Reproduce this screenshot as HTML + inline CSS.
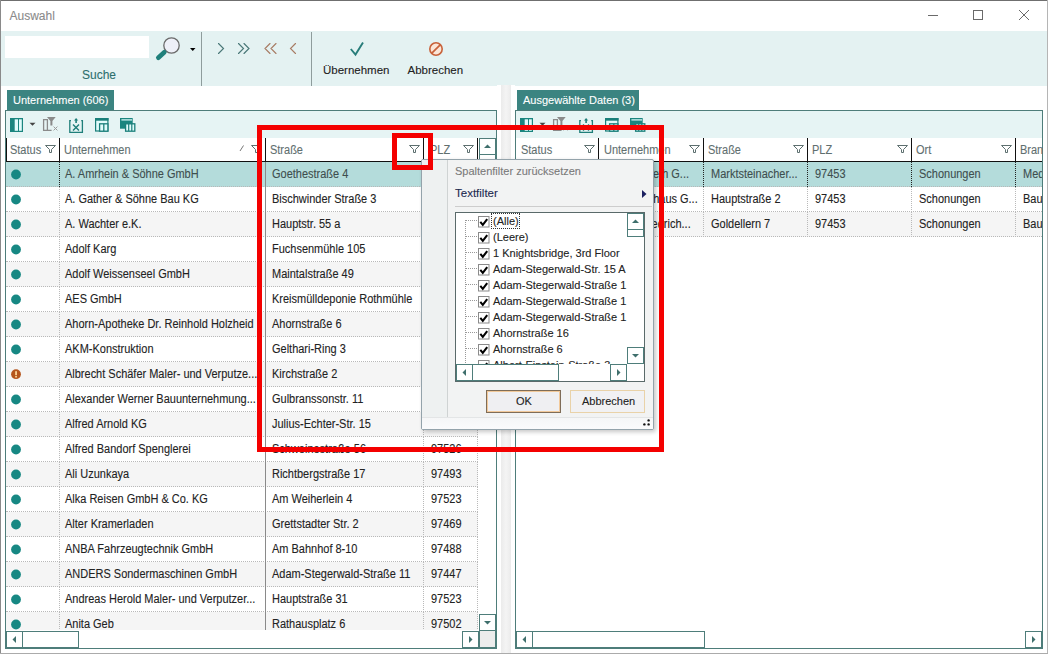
<!DOCTYPE html><html><head><meta charset="utf-8"><style>
html,body{margin:0;padding:0;}
body{width:1048px;height:654px;position:relative;overflow:hidden;background:#fff;font-family:"Liberation Sans",sans-serif;-webkit-text-stroke:0.1px currentColor;}
div{box-sizing:border-box;}
svg{position:absolute;overflow:visible;}
.c{position:absolute;top:0;line-height:24px;font-size:12px;white-space:nowrap;transform:scaleX(0.915);transform-origin:0 0;}
.h{position:absolute;font-size:12px;line-height:14px;white-space:nowrap;transform:scaleX(0.915);transform-origin:0 0;color:#5f6f6f;}
</style></head><body>
<div style="position:absolute;left:0px;top:0px;width:1048px;height:1px;background:#6f6f6f"></div>
<div style="position:absolute;left:0px;top:0px;width:1px;height:654px;background:#8a8a8a"></div>
<div style="position:absolute;left:1047px;top:0px;width:1px;height:654px;background:#b5b5b5"></div>
<div style="position:absolute;left:0px;top:653px;width:1048px;height:1px;background:#ababab"></div>
<div style="position:absolute;left:9.5px;top:10.14px;font-size:12px;line-height:13.788px;color:#8a8a8a;white-space:nowrap;">Auswahl</div>
<svg style="left:0;top:0" width="1048" height="30"><g stroke="#6a6a6a" stroke-width="1" fill="none"><line x1="928" y1="15.5" x2="938" y2="15.5"/><rect x="973.5" y="10.5" width="9" height="9"/><line x1="1019" y1="10" x2="1029" y2="20"/><line x1="1029" y1="10" x2="1019" y2="20"/></g></svg>
<div style="position:absolute;left:1px;top:31px;width:1046px;height:55px;background:#e4f2f2"></div>
<div style="position:absolute;left:5px;top:36px;width:144px;height:22px;background:#fff"></div>
<div style="position:absolute;left:82px;top:69.14px;font-size:12px;line-height:13.788px;color:#2d6f6d;white-space:nowrap;">Suche</div>
<svg style="left:150px;top:30px" width="50" height="40"><circle cx="21.5" cy="15.5" r="7.7" fill="#eef0f8" stroke="#6a6a6a" stroke-width="1.3"/><line x1="8.3" y1="27.8" x2="14.3" y2="22.3" stroke="#1f807b" stroke-width="4.6" stroke-linecap="round"/><path d="M40 18 L45.5 18 L42.75 21 Z" fill="#000"/></svg>
<div style="position:absolute;left:201px;top:32px;width:1px;height:54px;background:#8e9c9c"></div>
<div style="position:absolute;left:311px;top:32px;width:1px;height:54px;background:#8e9c9c"></div>
<svg style="left:210px;top:35px" width="100" height="30"><g fill="none" stroke-width="1.15" stroke-linecap="round"><path d="M8.5 8.5 L13.5 13.5 L8.5 18.5" stroke="#4a7878"/><path d="M28.5 8.5 L33.5 13.5 L28.5 18.5 M34 8.5 L39 13.5 L34 18.5" stroke="#4a7878"/><path d="M60 8.5 L55 13.5 L60 18.5 M66 8.5 L61 13.5 L66 18.5" stroke="#a87c64"/><path d="M85.5 8.5 L80.5 13.5 L85.5 18.5" stroke="#a87c64"/></g></svg>
<svg style="left:340px;top:35px" width="120" height="30"><g fill="none" stroke-width="1.8" stroke-linecap="butt"><path d="M10.8 14 L15.5 19.6 L23 7.4" stroke="#287d7a" stroke-width="1.9"/><circle cx="96" cy="14" r="6.2" stroke="#c8623a" fill="#fbe6d8" stroke-width="1.6"/><line x1="100.2" y1="9.8" x2="91.8" y2="18.2" stroke="#c8623a" stroke-width="1.7"/></g></svg>
<div style="position:absolute;left:323px;top:63.59px;font-size:11.5px;line-height:13.213px;color:#222;white-space:nowrap;">Übernehmen</div>
<div style="position:absolute;left:407.5px;top:63.59px;font-size:11.5px;line-height:13.213px;color:#222;white-space:nowrap;">Abbrechen</div>
<div style="position:absolute;left:7px;top:90px;width:107px;height:20px;background:#3b8481"></div>
<div style="position:absolute;left:13px;top:94.05px;font-size:11px;line-height:12.639px;color:#fff;white-space:nowrap;">Unternehmen (606)</div>
<div style="position:absolute;left:5px;top:110px;width:492px;height:539px;border:1px solid #4e7d7a;background:#fff"></div>
<div style="position:absolute;left:6px;top:111px;width:490px;height:27px;background:#e6f4f4"></div>
<svg style="left:5px;top:110px" width="140" height="28"><rect x="5" y="8" width="13" height="14" fill="#1a857f"/><rect x="9.7" y="9.3" width="3.3" height="11.5" fill="#e0fbfb"/><rect x="14" y="9.3" width="2.8" height="11.5" fill="#e0fbfb"/><path d="M24.5 12.8 L30.5 12.8 L27.5 15.8 Z" fill="#444"/><path d="M38.6 9.6 H42.4 V20.4 H38.6 Z M42.4 20.4 H46.6" fill="none" stroke="#8a8a8a" stroke-width="1.3"/><path d="M42 7 H50.7 L47.4 11 V15.5 H45.4 V11 Z" fill="#8a8a8a"/><path d="M48.6 16.6 L52.4 20.4 M52.4 16.6 L48.6 20.4" stroke="#9a9a9a" stroke-width="1"/><path d="M66 10.6 H64.8 V22.3 H77.4 V10.6 H76.2" fill="none" stroke="#1f7f7a" stroke-width="1.3"/><path d="M71.1 13 V9.5" fill="none" stroke="#1f7f7a" stroke-width="1.6"/><path d="M69 10.6 L71.1 8 L73.2 10.6 Z" fill="#1f7f7a"/><path d="M68 14.4 L74 20.6 M74 14.4 L68 20.6" stroke="#1f7f7a" stroke-width="1.4"/><rect x="90.6" y="8.6" width="12.3" height="12.4" fill="#e0fbfb" stroke="#1a7f7a" stroke-width="1.2"/><rect x="90" y="8" width="13.5" height="2.7" fill="#1a7f7a"/><rect x="94.6" y="13.8" width="8.3" height="7.4" fill="#e0fbfb" stroke="#1a7f7a" stroke-width="1.3"/><line x1="98.8" y1="13.8" x2="98.8" y2="21" stroke="#1a7f7a" stroke-width="1.3"/><rect x="115" y="8" width="12.7" height="10.7" fill="#1a857f"/><rect x="116.4" y="9.3" width="10.6" height="1.2" fill="#e0fbfb"/><rect x="120.6" y="13.8" width="9.2" height="7.4" fill="#e0fbfb" stroke="#1a7f7a" stroke-width="1.3"/><line x1="123.7" y1="13.8" x2="123.7" y2="21" stroke="#1a7f7a" stroke-width="1.2"/><line x1="126.8" y1="13.8" x2="126.8" y2="21" stroke="#1a7f7a" stroke-width="1.2"/></svg>
<div style="position:absolute;left:6px;top:138px;width:472px;height:24px;background:#fff;border-bottom:1px solid #111"></div>
<div style="position:absolute;left:6px;top:138px;width:1px;height:24px;background:#111"></div>
<div style="position:absolute;left:59px;top:138px;width:1px;height:24px;background:#111"></div>
<div style="position:absolute;left:265px;top:138px;width:1px;height:24px;background:#111"></div>
<div style="position:absolute;left:423px;top:138px;width:1px;height:24px;background:#111"></div>
<div style="position:absolute;left:477px;top:138px;width:1px;height:24px;background:#111"></div>
<div class="h" style="left:10px;top:143px">Status</div>
<svg style="left:45px;top:145px" width="12" height="10"><path d="M0.5 0.5 H10.5 L6.5 4.5 V7.5 H4.5 V4.5 Z" fill="none" stroke="#5d6f6f" stroke-width="1" stroke-linejoin="miter"/></svg>
<div class="h" style="left:64px;top:143px">Unternehmen</div>
<svg style="left:251px;top:145px" width="12" height="10"><path d="M0.5 0.5 H10.5 L6.5 4.5 V7.5 H4.5 V4.5 Z" fill="none" stroke="#5d6f6f" stroke-width="1" stroke-linejoin="miter"/></svg>
<svg style="left:239px;top:144px" width="6" height="8"><line x1="1" y1="7" x2="4.5" y2="1.5" stroke="#777" stroke-width="1"/></svg>
<div class="h" style="left:270px;top:143px">Straße</div>
<svg style="left:409px;top:145px" width="12" height="10"><path d="M0.5 0.5 H10.5 L6.5 4.5 V7.5 H4.5 V4.5 Z" fill="none" stroke="#5d6f6f" stroke-width="1" stroke-linejoin="miter"/></svg>
<div class="h" style="left:429.5px;top:143px">PLZ</div>
<svg style="left:463px;top:145px" width="12" height="10"><path d="M0.5 0.5 H10.5 L6.5 4.5 V7.5 H4.5 V4.5 Z" fill="none" stroke="#5d6f6f" stroke-width="1" stroke-linejoin="miter"/></svg>
<div style="position:absolute;left:6px;top:162px;width:472px;height:468px;overflow:hidden">
<div style="position:absolute;left:0;top:0px;width:472px;height:25px;background:#b4dcdb;border-bottom:1px dotted #b9b9b9">
<div style="position:absolute;left:53px;top:0;height:25px;border-left:1px dotted #222"></div>
<div style="position:absolute;left:259px;top:0;height:25px;width:1px;background:#8a8a8a"></div>
<div style="position:absolute;left:417px;top:0;height:25px;border-left:1px dotted #222"></div>
<div style="position:absolute;left:471px;top:0;height:25px;border-left:1px dotted #222"></div>
<svg style="left:5px;top:7px" width="11" height="11"><circle cx="5" cy="5.5" r="4.9" fill="#178883"/></svg>
<div class="c" style="left:59px;color:#3e4e4e">A. Amrhein &amp; Söhne GmbH</div>
<div class="c" style="left:265.5px;color:#3e4e4e">Goethestraße 4</div>
<div class="c" style="left:424.5px;color:#3e4e4e">97453</div>
</div>
<div style="position:absolute;left:0;top:25px;width:472px;height:25px;background:#fff;border-bottom:1px dotted #b9b9b9">
<div style="position:absolute;left:53px;top:0;height:25px;border-left:1px dotted #b9b9b9"></div>
<div style="position:absolute;left:259px;top:0;height:25px;width:1px;background:#8a8a8a"></div>
<div style="position:absolute;left:417px;top:0;height:25px;border-left:1px dotted #b9b9b9"></div>
<div style="position:absolute;left:471px;top:0;height:25px;border-left:1px dotted #b9b9b9"></div>
<svg style="left:5px;top:7px" width="11" height="11"><circle cx="5" cy="5.5" r="4.9" fill="#178883"/></svg>
<div class="c" style="left:59px;color:#222">A. Gather &amp; Söhne Bau KG</div>
<div class="c" style="left:265.5px;color:#222">Bischwinder Straße 3</div>
<div class="c" style="left:424.5px;color:#222">97500</div>
</div>
<div style="position:absolute;left:0;top:50px;width:472px;height:25px;background:#f5f5f5;border-bottom:1px dotted #b9b9b9">
<div style="position:absolute;left:53px;top:0;height:25px;border-left:1px dotted #b9b9b9"></div>
<div style="position:absolute;left:259px;top:0;height:25px;width:1px;background:#8a8a8a"></div>
<div style="position:absolute;left:417px;top:0;height:25px;border-left:1px dotted #b9b9b9"></div>
<div style="position:absolute;left:471px;top:0;height:25px;border-left:1px dotted #b9b9b9"></div>
<svg style="left:5px;top:7px" width="11" height="11"><circle cx="5" cy="5.5" r="4.9" fill="#178883"/></svg>
<div class="c" style="left:59px;color:#222">A. Wachter e.K.</div>
<div class="c" style="left:265.5px;color:#222">Hauptstr. 55 a</div>
<div class="c" style="left:424.5px;color:#222">97500</div>
</div>
<div style="position:absolute;left:0;top:75px;width:472px;height:25px;background:#fff;border-bottom:1px dotted #b9b9b9">
<div style="position:absolute;left:53px;top:0;height:25px;border-left:1px dotted #b9b9b9"></div>
<div style="position:absolute;left:259px;top:0;height:25px;width:1px;background:#8a8a8a"></div>
<div style="position:absolute;left:417px;top:0;height:25px;border-left:1px dotted #b9b9b9"></div>
<div style="position:absolute;left:471px;top:0;height:25px;border-left:1px dotted #b9b9b9"></div>
<svg style="left:5px;top:7px" width="11" height="11"><circle cx="5" cy="5.5" r="4.9" fill="#178883"/></svg>
<div class="c" style="left:59px;color:#222">Adolf Karg</div>
<div class="c" style="left:265.5px;color:#222">Fuchsenmühle 105</div>
<div class="c" style="left:424.5px;color:#222">97500</div>
</div>
<div style="position:absolute;left:0;top:100px;width:472px;height:25px;background:#f5f5f5;border-bottom:1px dotted #b9b9b9">
<div style="position:absolute;left:53px;top:0;height:25px;border-left:1px dotted #b9b9b9"></div>
<div style="position:absolute;left:259px;top:0;height:25px;width:1px;background:#8a8a8a"></div>
<div style="position:absolute;left:417px;top:0;height:25px;border-left:1px dotted #b9b9b9"></div>
<div style="position:absolute;left:471px;top:0;height:25px;border-left:1px dotted #b9b9b9"></div>
<svg style="left:5px;top:7px" width="11" height="11"><circle cx="5" cy="5.5" r="4.9" fill="#178883"/></svg>
<div class="c" style="left:59px;color:#222">Adolf Weissenseel GmbH</div>
<div class="c" style="left:265.5px;color:#222">Maintalstraße 49</div>
<div class="c" style="left:424.5px;color:#222">97500</div>
</div>
<div style="position:absolute;left:0;top:125px;width:472px;height:25px;background:#fff;border-bottom:1px dotted #b9b9b9">
<div style="position:absolute;left:53px;top:0;height:25px;border-left:1px dotted #b9b9b9"></div>
<div style="position:absolute;left:259px;top:0;height:25px;width:1px;background:#8a8a8a"></div>
<div style="position:absolute;left:417px;top:0;height:25px;border-left:1px dotted #b9b9b9"></div>
<div style="position:absolute;left:471px;top:0;height:25px;border-left:1px dotted #b9b9b9"></div>
<svg style="left:5px;top:7px" width="11" height="11"><circle cx="5" cy="5.5" r="4.9" fill="#178883"/></svg>
<div class="c" style="left:59px;color:#222">AES GmbH</div>
<div class="c" style="left:265.5px;color:#222">Kreismülldeponie Rothmühle</div>
<div class="c" style="left:424.5px;color:#222">97500</div>
</div>
<div style="position:absolute;left:0;top:150px;width:472px;height:25px;background:#f5f5f5;border-bottom:1px dotted #b9b9b9">
<div style="position:absolute;left:53px;top:0;height:25px;border-left:1px dotted #b9b9b9"></div>
<div style="position:absolute;left:259px;top:0;height:25px;width:1px;background:#8a8a8a"></div>
<div style="position:absolute;left:417px;top:0;height:25px;border-left:1px dotted #b9b9b9"></div>
<div style="position:absolute;left:471px;top:0;height:25px;border-left:1px dotted #b9b9b9"></div>
<svg style="left:5px;top:7px" width="11" height="11"><circle cx="5" cy="5.5" r="4.9" fill="#178883"/></svg>
<div class="c" style="left:59px;color:#222">Ahorn-Apotheke Dr. Reinhold Holzheid</div>
<div class="c" style="left:265.5px;color:#222">Ahornstraße 6</div>
<div class="c" style="left:424.5px;color:#222">97500</div>
</div>
<div style="position:absolute;left:0;top:175px;width:472px;height:25px;background:#fff;border-bottom:1px dotted #b9b9b9">
<div style="position:absolute;left:53px;top:0;height:25px;border-left:1px dotted #b9b9b9"></div>
<div style="position:absolute;left:259px;top:0;height:25px;width:1px;background:#8a8a8a"></div>
<div style="position:absolute;left:417px;top:0;height:25px;border-left:1px dotted #b9b9b9"></div>
<div style="position:absolute;left:471px;top:0;height:25px;border-left:1px dotted #b9b9b9"></div>
<svg style="left:5px;top:7px" width="11" height="11"><circle cx="5" cy="5.5" r="4.9" fill="#178883"/></svg>
<div class="c" style="left:59px;color:#222">AKM-Konstruktion</div>
<div class="c" style="left:265.5px;color:#222">Gelthari-Ring 3</div>
<div class="c" style="left:424.5px;color:#222">97500</div>
</div>
<div style="position:absolute;left:0;top:200px;width:472px;height:25px;background:#f5f5f5;border-bottom:1px dotted #b9b9b9">
<div style="position:absolute;left:53px;top:0;height:25px;border-left:1px dotted #b9b9b9"></div>
<div style="position:absolute;left:259px;top:0;height:25px;width:1px;background:#8a8a8a"></div>
<div style="position:absolute;left:417px;top:0;height:25px;border-left:1px dotted #b9b9b9"></div>
<div style="position:absolute;left:471px;top:0;height:25px;border-left:1px dotted #b9b9b9"></div>
<svg style="left:5px;top:7px" width="11" height="11"><circle cx="5" cy="5.2" r="4.9" fill="#b5561e"/><rect x="4.2" y="2.2" width="1.7" height="4" fill="#ffdca0"/><rect x="4.2" y="7" width="1.7" height="1.5" fill="#ffdca0"/></svg>
<div class="c" style="left:59px;color:#222">Albrecht Schäfer Maler- und Verputze...</div>
<div class="c" style="left:265.5px;color:#222">Kirchstraße 2</div>
<div class="c" style="left:424.5px;color:#222">97500</div>
</div>
<div style="position:absolute;left:0;top:225px;width:472px;height:25px;background:#fff;border-bottom:1px dotted #b9b9b9">
<div style="position:absolute;left:53px;top:0;height:25px;border-left:1px dotted #b9b9b9"></div>
<div style="position:absolute;left:259px;top:0;height:25px;width:1px;background:#8a8a8a"></div>
<div style="position:absolute;left:417px;top:0;height:25px;border-left:1px dotted #b9b9b9"></div>
<div style="position:absolute;left:471px;top:0;height:25px;border-left:1px dotted #b9b9b9"></div>
<svg style="left:5px;top:7px" width="11" height="11"><circle cx="5" cy="5.5" r="4.9" fill="#178883"/></svg>
<div class="c" style="left:59px;color:#222">Alexander Werner Bauunternehmung...</div>
<div class="c" style="left:265.5px;color:#222">Gulbranssonstr. 11</div>
<div class="c" style="left:424.5px;color:#222">97500</div>
</div>
<div style="position:absolute;left:0;top:250px;width:472px;height:25px;background:#f5f5f5;border-bottom:1px dotted #b9b9b9">
<div style="position:absolute;left:53px;top:0;height:25px;border-left:1px dotted #b9b9b9"></div>
<div style="position:absolute;left:259px;top:0;height:25px;width:1px;background:#8a8a8a"></div>
<div style="position:absolute;left:417px;top:0;height:25px;border-left:1px dotted #b9b9b9"></div>
<div style="position:absolute;left:471px;top:0;height:25px;border-left:1px dotted #b9b9b9"></div>
<svg style="left:5px;top:7px" width="11" height="11"><circle cx="5" cy="5.5" r="4.9" fill="#178883"/></svg>
<div class="c" style="left:59px;color:#222">Alfred Arnold KG</div>
<div class="c" style="left:265.5px;color:#222">Julius-Echter-Str. 15</div>
<div class="c" style="left:424.5px;color:#222">97500</div>
</div>
<div style="position:absolute;left:0;top:275px;width:472px;height:25px;background:#fff;border-bottom:1px dotted #b9b9b9">
<div style="position:absolute;left:53px;top:0;height:25px;border-left:1px dotted #b9b9b9"></div>
<div style="position:absolute;left:259px;top:0;height:25px;width:1px;background:#8a8a8a"></div>
<div style="position:absolute;left:417px;top:0;height:25px;border-left:1px dotted #b9b9b9"></div>
<div style="position:absolute;left:471px;top:0;height:25px;border-left:1px dotted #b9b9b9"></div>
<svg style="left:5px;top:7px" width="11" height="11"><circle cx="5" cy="5.5" r="4.9" fill="#178883"/></svg>
<div class="c" style="left:59px;color:#222">Alfred Bandorf Spenglerei</div>
<div class="c" style="left:265.5px;color:#222">Schweinestraße 56</div>
<div class="c" style="left:424.5px;color:#222">97526</div>
</div>
<div style="position:absolute;left:0;top:300px;width:472px;height:25px;background:#f5f5f5;border-bottom:1px dotted #b9b9b9">
<div style="position:absolute;left:53px;top:0;height:25px;border-left:1px dotted #b9b9b9"></div>
<div style="position:absolute;left:259px;top:0;height:25px;width:1px;background:#8a8a8a"></div>
<div style="position:absolute;left:417px;top:0;height:25px;border-left:1px dotted #b9b9b9"></div>
<div style="position:absolute;left:471px;top:0;height:25px;border-left:1px dotted #b9b9b9"></div>
<svg style="left:5px;top:7px" width="11" height="11"><circle cx="5" cy="5.5" r="4.9" fill="#178883"/></svg>
<div class="c" style="left:59px;color:#222">Ali Uzunkaya</div>
<div class="c" style="left:265.5px;color:#222">Richtbergstraße 17</div>
<div class="c" style="left:424.5px;color:#222">97493</div>
</div>
<div style="position:absolute;left:0;top:325px;width:472px;height:25px;background:#fff;border-bottom:1px dotted #b9b9b9">
<div style="position:absolute;left:53px;top:0;height:25px;border-left:1px dotted #b9b9b9"></div>
<div style="position:absolute;left:259px;top:0;height:25px;width:1px;background:#8a8a8a"></div>
<div style="position:absolute;left:417px;top:0;height:25px;border-left:1px dotted #b9b9b9"></div>
<div style="position:absolute;left:471px;top:0;height:25px;border-left:1px dotted #b9b9b9"></div>
<svg style="left:5px;top:7px" width="11" height="11"><circle cx="5" cy="5.5" r="4.9" fill="#178883"/></svg>
<div class="c" style="left:59px;color:#222">Alka Reisen GmbH &amp; Co. KG</div>
<div class="c" style="left:265.5px;color:#222">Am Weiherlein 4</div>
<div class="c" style="left:424.5px;color:#222">97523</div>
</div>
<div style="position:absolute;left:0;top:350px;width:472px;height:25px;background:#f5f5f5;border-bottom:1px dotted #b9b9b9">
<div style="position:absolute;left:53px;top:0;height:25px;border-left:1px dotted #b9b9b9"></div>
<div style="position:absolute;left:259px;top:0;height:25px;width:1px;background:#8a8a8a"></div>
<div style="position:absolute;left:417px;top:0;height:25px;border-left:1px dotted #b9b9b9"></div>
<div style="position:absolute;left:471px;top:0;height:25px;border-left:1px dotted #b9b9b9"></div>
<svg style="left:5px;top:7px" width="11" height="11"><circle cx="5" cy="5.5" r="4.9" fill="#178883"/></svg>
<div class="c" style="left:59px;color:#222">Alter Kramerladen</div>
<div class="c" style="left:265.5px;color:#222">Grettstadter Str. 2</div>
<div class="c" style="left:424.5px;color:#222">97469</div>
</div>
<div style="position:absolute;left:0;top:375px;width:472px;height:25px;background:#fff;border-bottom:1px dotted #b9b9b9">
<div style="position:absolute;left:53px;top:0;height:25px;border-left:1px dotted #b9b9b9"></div>
<div style="position:absolute;left:259px;top:0;height:25px;width:1px;background:#8a8a8a"></div>
<div style="position:absolute;left:417px;top:0;height:25px;border-left:1px dotted #b9b9b9"></div>
<div style="position:absolute;left:471px;top:0;height:25px;border-left:1px dotted #b9b9b9"></div>
<svg style="left:5px;top:7px" width="11" height="11"><circle cx="5" cy="5.5" r="4.9" fill="#178883"/></svg>
<div class="c" style="left:59px;color:#222">ANBA Fahrzeugtechnik GmbH</div>
<div class="c" style="left:265.5px;color:#222">Am Bahnhof 8-10</div>
<div class="c" style="left:424.5px;color:#222">97488</div>
</div>
<div style="position:absolute;left:0;top:400px;width:472px;height:25px;background:#f5f5f5;border-bottom:1px dotted #b9b9b9">
<div style="position:absolute;left:53px;top:0;height:25px;border-left:1px dotted #b9b9b9"></div>
<div style="position:absolute;left:259px;top:0;height:25px;width:1px;background:#8a8a8a"></div>
<div style="position:absolute;left:417px;top:0;height:25px;border-left:1px dotted #b9b9b9"></div>
<div style="position:absolute;left:471px;top:0;height:25px;border-left:1px dotted #b9b9b9"></div>
<svg style="left:5px;top:7px" width="11" height="11"><circle cx="5" cy="5.5" r="4.9" fill="#178883"/></svg>
<div class="c" style="left:59px;color:#222">ANDERS Sondermaschinen GmbH</div>
<div class="c" style="left:265.5px;color:#222">Adam-Stegerwald-Straße 11</div>
<div class="c" style="left:424.5px;color:#222">97447</div>
</div>
<div style="position:absolute;left:0;top:425px;width:472px;height:25px;background:#fff;border-bottom:1px dotted #b9b9b9">
<div style="position:absolute;left:53px;top:0;height:25px;border-left:1px dotted #b9b9b9"></div>
<div style="position:absolute;left:259px;top:0;height:25px;width:1px;background:#8a8a8a"></div>
<div style="position:absolute;left:417px;top:0;height:25px;border-left:1px dotted #b9b9b9"></div>
<div style="position:absolute;left:471px;top:0;height:25px;border-left:1px dotted #b9b9b9"></div>
<svg style="left:5px;top:7px" width="11" height="11"><circle cx="5" cy="5.5" r="4.9" fill="#178883"/></svg>
<div class="c" style="left:59px;color:#222">Andreas Herold Maler- und Verputzer...</div>
<div class="c" style="left:265.5px;color:#222">Hauptstraße 31</div>
<div class="c" style="left:424.5px;color:#222">97523</div>
</div>
<div style="position:absolute;left:0;top:450px;width:472px;height:25px;background:#f5f5f5;border-bottom:1px dotted #b9b9b9">
<div style="position:absolute;left:53px;top:0;height:25px;border-left:1px dotted #b9b9b9"></div>
<div style="position:absolute;left:259px;top:0;height:25px;width:1px;background:#8a8a8a"></div>
<div style="position:absolute;left:417px;top:0;height:25px;border-left:1px dotted #b9b9b9"></div>
<div style="position:absolute;left:471px;top:0;height:25px;border-left:1px dotted #b9b9b9"></div>
<svg style="left:5px;top:7px" width="11" height="11"><circle cx="5" cy="5.5" r="4.9" fill="#178883"/></svg>
<div class="c" style="left:59px;color:#222">Anita Geb</div>
<div class="c" style="left:265.5px;color:#222">Rathausplatz 6</div>
<div class="c" style="left:424.5px;color:#222">97502</div>
</div>
</div>
<div style="position:absolute;left:478px;top:138px;width:18px;height:492px;background:#fff"></div>
<div style="position:absolute;left:479px;top:154px;width:17px;height:40px;border:1px solid #4e7d7a;background:#fff"></div>
<div style="position:absolute;left:479px;top:138px;width:17px;height:17px;border:1px solid #4e7d7a;background:#fff"></div>
<svg style="left:0;top:0" width="1048" height="654"><path d="M484.0 148.0 L491.0 148.0 L487.5 144.5 Z" fill="#3f6f6c"/></svg>
<div style="position:absolute;left:479px;top:614px;width:17px;height:17px;border:1px solid #4e7d7a;background:#fff"></div>
<svg style="left:0;top:0" width="1048" height="654"><path d="M484.0 621.0 L491.0 621.0 L487.5 624.5 Z" fill="#3f6f6c"/></svg>
<div style="position:absolute;left:479px;top:630px;width:17px;height:18px;background:#ececec;border:1px solid #4e7d7a"></div>
<div style="position:absolute;left:6px;top:630px;width:473px;height:18px;background:#fff"></div>
<div style="position:absolute;left:6px;top:631px;width:17px;height:17px;border:1px solid #4e7d7a;background:#fff"></div>
<svg style="left:0;top:0" width="1048" height="654"><path d="M16.0 636.0 L16.0 643.0 L12.5 639.5 Z" fill="#3f6f6c"/></svg>
<div style="position:absolute;left:22px;top:631px;width:57px;height:17px;border:1px solid #4e7d7a;background:#fff"></div>
<div style="position:absolute;left:462px;top:631px;width:17px;height:17px;border:1px solid #4e7d7a;background:#fff"></div>
<svg style="left:0;top:0" width="1048" height="654"><path d="M469.0 636.0 L469.0 643.0 L472.5 639.5 Z" fill="#3f6f6c"/></svg>
<div style="position:absolute;left:497px;top:85px;width:18px;height:568px;background:#fff"></div>
<div style="position:absolute;left:501px;top:85px;width:10px;height:568px;background:linear-gradient(90deg,#ebebeb,#f4f4f4 50%,#ebebeb)"></div>
<div style="position:absolute;left:517px;top:90px;width:122px;height:20px;background:#3b8481"></div>
<div style="position:absolute;left:523px;top:94.05px;font-size:11px;line-height:12.639px;color:#fff;white-space:nowrap;">Ausgewählte Daten (3)</div>
<div style="position:absolute;left:515px;top:110px;width:528px;height:539px;border:1px solid #4e7d7a;background:#fff"></div>
<div style="position:absolute;left:516px;top:111px;width:526px;height:27px;background:#e6f4f4"></div>
<svg style="left:515px;top:110px" width="140" height="28"><rect x="5" y="8" width="13" height="14" fill="#1a857f"/><rect x="9.7" y="9.3" width="3.3" height="11.5" fill="#e0fbfb"/><rect x="14" y="9.3" width="2.8" height="11.5" fill="#e0fbfb"/><path d="M24.5 12.8 L30.5 12.8 L27.5 15.8 Z" fill="#444"/><path d="M38.6 9.6 H42.4 V20.4 H38.6 Z M42.4 20.4 H46.6" fill="none" stroke="#8a8a8a" stroke-width="1.3"/><path d="M42 7 H50.7 L47.4 11 V15.5 H45.4 V11 Z" fill="#8a8a8a"/><path d="M48.6 16.6 L52.4 20.4 M52.4 16.6 L48.6 20.4" stroke="#9a9a9a" stroke-width="1"/><path d="M66 10.6 H64.8 V22.3 H77.4 V10.6 H76.2" fill="none" stroke="#1f7f7a" stroke-width="1.3"/><path d="M71.1 13 V9.5" fill="none" stroke="#1f7f7a" stroke-width="1.6"/><path d="M69 10.6 L71.1 8 L73.2 10.6 Z" fill="#1f7f7a"/><path d="M68 14.4 L74 20.6 M74 14.4 L68 20.6" stroke="#1f7f7a" stroke-width="1.4"/><rect x="90.6" y="8.6" width="12.3" height="12.4" fill="#e0fbfb" stroke="#1a7f7a" stroke-width="1.2"/><rect x="90" y="8" width="13.5" height="2.7" fill="#1a7f7a"/><rect x="94.6" y="13.8" width="8.3" height="7.4" fill="#e0fbfb" stroke="#1a7f7a" stroke-width="1.3"/><line x1="98.8" y1="13.8" x2="98.8" y2="21" stroke="#1a7f7a" stroke-width="1.3"/><rect x="115" y="8" width="12.7" height="10.7" fill="#1a857f"/><rect x="116.4" y="9.3" width="10.6" height="1.2" fill="#e0fbfb"/><rect x="120.6" y="13.8" width="9.2" height="7.4" fill="#e0fbfb" stroke="#1a7f7a" stroke-width="1.3"/><line x1="123.7" y1="13.8" x2="123.7" y2="21" stroke="#1a7f7a" stroke-width="1.2"/><line x1="126.8" y1="13.8" x2="126.8" y2="21" stroke="#1a7f7a" stroke-width="1.2"/></svg>
<div style="position:absolute;left:516px;top:138px;width:526px;height:24px;background:#fff;border-bottom:1px solid #111"></div>
<div style="position:absolute;left:598px;top:138px;width:1px;height:24px;background:#111"></div>
<div style="position:absolute;left:703px;top:138px;width:1px;height:24px;background:#111"></div>
<div style="position:absolute;left:807px;top:138px;width:1px;height:24px;background:#111"></div>
<div style="position:absolute;left:911px;top:138px;width:1px;height:24px;background:#111"></div>
<div style="position:absolute;left:1015px;top:138px;width:1px;height:24px;background:#111"></div>
<div class="h" style="left:521px;top:143px">Status</div>
<svg style="left:584px;top:145px" width="12" height="10"><path d="M0.5 0.5 H10.5 L6.5 4.5 V7.5 H4.5 V4.5 Z" fill="none" stroke="#5d6f6f" stroke-width="1" stroke-linejoin="miter"/></svg>
<div class="h" style="left:603.5px;top:143px">Unternehmen</div>
<svg style="left:689px;top:145px" width="12" height="10"><path d="M0.5 0.5 H10.5 L6.5 4.5 V7.5 H4.5 V4.5 Z" fill="none" stroke="#5d6f6f" stroke-width="1" stroke-linejoin="miter"/></svg>
<div class="h" style="left:708px;top:143px">Straße</div>
<svg style="left:793px;top:145px" width="12" height="10"><path d="M0.5 0.5 H10.5 L6.5 4.5 V7.5 H4.5 V4.5 Z" fill="none" stroke="#5d6f6f" stroke-width="1" stroke-linejoin="miter"/></svg>
<div class="h" style="left:812px;top:143px">PLZ</div>
<svg style="left:897px;top:145px" width="12" height="10"><path d="M0.5 0.5 H10.5 L6.5 4.5 V7.5 H4.5 V4.5 Z" fill="none" stroke="#5d6f6f" stroke-width="1" stroke-linejoin="miter"/></svg>
<div class="h" style="left:916px;top:143px">Ort</div>
<svg style="left:1001px;top:145px" width="12" height="10"><path d="M0.5 0.5 H10.5 L6.5 4.5 V7.5 H4.5 V4.5 Z" fill="none" stroke="#5d6f6f" stroke-width="1" stroke-linejoin="miter"/></svg>
<div class="h" style="left:1020px;top:143px">Bran</div>
<div style="position:absolute;left:516px;top:162px;width:526px;height:76px;overflow:hidden">
<div style="position:absolute;left:0;top:0px;width:526px;height:25px;background:#b4dcdb;border-bottom:1px dotted #b9b9b9">
<div style="position:absolute;left:82px;top:0;height:25px;border-left:1px dotted #222"></div>
<div style="position:absolute;left:187px;top:0;height:25px;border-left:1px dotted #222"></div>
<div style="position:absolute;left:291px;top:0;height:25px;border-left:1px dotted #222"></div>
<div style="position:absolute;left:395px;top:0;height:25px;border-left:1px dotted #222"></div>
<div style="position:absolute;left:499px;top:0;height:25px;border-left:1px dotted #222"></div>
<svg style="left:6px;top:7px" width="11" height="11"><circle cx="5" cy="5.5" r="4.9" fill="#178883"/></svg>
<div class="c" style="right:353px;color:#3e4e4e;transform-origin:100% 0">Wilhelm Kleth G...</div>
<div class="c" style="left:195px;color:#3e4e4e">Marktsteinacher...</div>
<div class="c" style="left:299px;color:#3e4e4e">97453</div>
<div class="c" style="left:403px;color:#3e4e4e">Schonungen</div>
<div class="c" style="left:507px;color:#3e4e4e">Medizin</div>
</div>
<div style="position:absolute;left:0;top:25px;width:526px;height:25px;background:#fff;border-bottom:1px dotted #b9b9b9">
<div style="position:absolute;left:82px;top:0;height:25px;border-left:1px dotted #b9b9b9"></div>
<div style="position:absolute;left:187px;top:0;height:25px;border-left:1px dotted #b9b9b9"></div>
<div style="position:absolute;left:291px;top:0;height:25px;border-left:1px dotted #b9b9b9"></div>
<div style="position:absolute;left:395px;top:0;height:25px;border-left:1px dotted #b9b9b9"></div>
<div style="position:absolute;left:499px;top:0;height:25px;border-left:1px dotted #b9b9b9"></div>
<svg style="left:6px;top:7px" width="11" height="11"><circle cx="5" cy="5.5" r="4.9" fill="#178883"/></svg>
<div class="c" style="right:344px;color:#222;transform-origin:100% 0">Schenkhaus G...</div>
<div class="c" style="left:195px;color:#222">Hauptstraße 2</div>
<div class="c" style="left:299px;color:#222">97453</div>
<div class="c" style="left:403px;color:#222">Schonungen</div>
<div class="c" style="left:507px;color:#222">Bau</div>
</div>
<div style="position:absolute;left:0;top:50px;width:526px;height:25px;background:#f5f5f5;border-bottom:1px dotted #b9b9b9">
<div style="position:absolute;left:82px;top:0;height:25px;border-left:1px dotted #b9b9b9"></div>
<div style="position:absolute;left:187px;top:0;height:25px;border-left:1px dotted #b9b9b9"></div>
<div style="position:absolute;left:291px;top:0;height:25px;border-left:1px dotted #b9b9b9"></div>
<div style="position:absolute;left:395px;top:0;height:25px;border-left:1px dotted #b9b9b9"></div>
<div style="position:absolute;left:499px;top:0;height:25px;border-left:1px dotted #b9b9b9"></div>
<svg style="left:6px;top:7px" width="11" height="11"><circle cx="5" cy="5.5" r="4.9" fill="#178883"/></svg>
<div class="c" style="right:351px;color:#222;transform-origin:100% 0">Friedrich...</div>
<div class="c" style="left:195px;color:#222">Goldellern 7</div>
<div class="c" style="left:299px;color:#222">97453</div>
<div class="c" style="left:403px;color:#222">Schonungen</div>
<div class="c" style="left:507px;color:#222">Bau</div>
</div>
</div>
<div style="position:absolute;left:516px;top:631px;width:17px;height:17px;border:1px solid #4e7d7a;background:#fff"></div>
<svg style="left:0;top:0" width="1048" height="654"><path d="M526.0 636.0 L526.0 643.0 L522.5 639.5 Z" fill="#3f6f6c"/></svg>
<div style="position:absolute;left:532px;top:631px;width:173px;height:17px;border:1px solid #4e7d7a;background:#fff"></div>
<div style="position:absolute;left:1025px;top:631px;width:17px;height:17px;border:1px solid #4e7d7a;background:#fff"></div>
<svg style="left:0;top:0" width="1048" height="654"><path d="M1032.0 636.0 L1032.0 643.0 L1035.5 639.5 Z" fill="#3f6f6c"/></svg>
<div style="position:absolute;left:421px;top:159px;width:233px;height:271px;background:#f2f3f3;border:1px solid #94a3ab;border-radius:2px;box-shadow:2px 2px 4px rgba(0,0,0,0.22)"></div>
<div style="position:absolute;left:422px;top:160px;width:26px;height:257px;background:#eef1f1;border-right:1px solid #cfd3d3"></div>
<div style="position:absolute;left:455px;top:164.54px;font-size:11px;line-height:12.639px;color:#7a7a7a;white-space:nowrap;">Spaltenfilter zurücksetzen</div>
<div style="position:absolute;left:455px;top:186.59px;font-size:11.5px;line-height:13.213px;color:#222a50;white-space:nowrap;">Textfilter</div>
<svg style="left:642px;top:190px" width="6" height="9"><path d="M0 0 L4.5 4 L0 8 Z" fill="#1b2060"/></svg>
<div style="position:absolute;left:455px;top:206px;width:197px;height:1px;background:#cdcdcd"></div>
<div style="position:absolute;left:455px;top:212px;width:190px;height:170px;background:#fff;border:1px solid #5a6a6a"></div>
<div style="position:absolute;left:456px;top:213px;width:171px;height:151px;overflow:hidden">
<div style="position:absolute;left:10px;top:7px;width:11px;border-top:1px dotted #999"></div>
<svg style="left:22px;top:3px" width="12" height="12"><rect x="0.5" y="0.5" width="10.5" height="10.5" fill="#fff" stroke="#8a8a8a"/><path d="M2.3 5.8 L4.8 8.8 L9.2 3.2" fill="none" stroke="#000" stroke-width="2.1"/></svg>
<div style="position:absolute;left:37px;top:0px;line-height:16px;font-size:11px;color:#222;white-space:nowrap">(Alle)</div>
<div style="position:absolute;left:10px;top:23px;width:11px;border-top:1px dotted #999"></div>
<svg style="left:22px;top:19px" width="12" height="12"><rect x="0.5" y="0.5" width="10.5" height="10.5" fill="#fff" stroke="#8a8a8a"/><path d="M2.3 5.8 L4.8 8.8 L9.2 3.2" fill="none" stroke="#000" stroke-width="2.1"/></svg>
<div style="position:absolute;left:37px;top:16px;line-height:16px;font-size:11px;color:#222;white-space:nowrap">(Leere)</div>
<div style="position:absolute;left:10px;top:39px;width:11px;border-top:1px dotted #999"></div>
<svg style="left:22px;top:35px" width="12" height="12"><rect x="0.5" y="0.5" width="10.5" height="10.5" fill="#fff" stroke="#8a8a8a"/><path d="M2.3 5.8 L4.8 8.8 L9.2 3.2" fill="none" stroke="#000" stroke-width="2.1"/></svg>
<div style="position:absolute;left:37px;top:32px;line-height:16px;font-size:11px;color:#222;white-space:nowrap">1 Knightsbridge, 3rd Floor</div>
<div style="position:absolute;left:10px;top:55px;width:11px;border-top:1px dotted #999"></div>
<svg style="left:22px;top:51px" width="12" height="12"><rect x="0.5" y="0.5" width="10.5" height="10.5" fill="#fff" stroke="#8a8a8a"/><path d="M2.3 5.8 L4.8 8.8 L9.2 3.2" fill="none" stroke="#000" stroke-width="2.1"/></svg>
<div style="position:absolute;left:37px;top:48px;line-height:16px;font-size:11px;color:#222;white-space:nowrap">Adam-Stegerwald-Str. 15 A</div>
<div style="position:absolute;left:10px;top:71px;width:11px;border-top:1px dotted #999"></div>
<svg style="left:22px;top:67px" width="12" height="12"><rect x="0.5" y="0.5" width="10.5" height="10.5" fill="#fff" stroke="#8a8a8a"/><path d="M2.3 5.8 L4.8 8.8 L9.2 3.2" fill="none" stroke="#000" stroke-width="2.1"/></svg>
<div style="position:absolute;left:37px;top:64px;line-height:16px;font-size:11px;color:#222;white-space:nowrap">Adam-Stegerwald-Straße 1</div>
<div style="position:absolute;left:10px;top:87px;width:11px;border-top:1px dotted #999"></div>
<svg style="left:22px;top:83px" width="12" height="12"><rect x="0.5" y="0.5" width="10.5" height="10.5" fill="#fff" stroke="#8a8a8a"/><path d="M2.3 5.8 L4.8 8.8 L9.2 3.2" fill="none" stroke="#000" stroke-width="2.1"/></svg>
<div style="position:absolute;left:37px;top:80px;line-height:16px;font-size:11px;color:#222;white-space:nowrap">Adam-Stegerwald-Straße 1</div>
<div style="position:absolute;left:10px;top:103px;width:11px;border-top:1px dotted #999"></div>
<svg style="left:22px;top:99px" width="12" height="12"><rect x="0.5" y="0.5" width="10.5" height="10.5" fill="#fff" stroke="#8a8a8a"/><path d="M2.3 5.8 L4.8 8.8 L9.2 3.2" fill="none" stroke="#000" stroke-width="2.1"/></svg>
<div style="position:absolute;left:37px;top:96px;line-height:16px;font-size:11px;color:#222;white-space:nowrap">Adam-Stegerwald-Straße 1</div>
<div style="position:absolute;left:10px;top:119px;width:11px;border-top:1px dotted #999"></div>
<svg style="left:22px;top:115px" width="12" height="12"><rect x="0.5" y="0.5" width="10.5" height="10.5" fill="#fff" stroke="#8a8a8a"/><path d="M2.3 5.8 L4.8 8.8 L9.2 3.2" fill="none" stroke="#000" stroke-width="2.1"/></svg>
<div style="position:absolute;left:37px;top:112px;line-height:16px;font-size:11px;color:#222;white-space:nowrap">Ahornstraße 16</div>
<div style="position:absolute;left:10px;top:135px;width:11px;border-top:1px dotted #999"></div>
<svg style="left:22px;top:131px" width="12" height="12"><rect x="0.5" y="0.5" width="10.5" height="10.5" fill="#fff" stroke="#8a8a8a"/><path d="M2.3 5.8 L4.8 8.8 L9.2 3.2" fill="none" stroke="#000" stroke-width="2.1"/></svg>
<div style="position:absolute;left:37px;top:128px;line-height:16px;font-size:11px;color:#222;white-space:nowrap">Ahornstraße 6</div>
<div style="position:absolute;left:10px;top:151px;width:11px;border-top:1px dotted #999"></div>
<svg style="left:22px;top:147px" width="12" height="12"><rect x="0.5" y="0.5" width="10.5" height="10.5" fill="#fff" stroke="#8a8a8a"/><path d="M2.3 5.8 L4.8 8.8 L9.2 3.2" fill="none" stroke="#000" stroke-width="2.1"/></svg>
<div style="position:absolute;left:37px;top:144px;line-height:16px;font-size:11px;color:#222;white-space:nowrap">Albert-Einstein-Straße 3</div>
<div style="position:absolute;left:9px;top:7px;height:151px;border-left:1px dotted #999"></div>
</div>
<div style="position:absolute;left:491px;top:213px;width:29px;height:16px;border:1px dotted #333"></div>
<div style="position:absolute;left:627px;top:213px;width:17px;height:17px;border:1px solid #4e7d7a;background:#fff"></div>
<svg style="left:0;top:0" width="1048" height="654"><path d="M632.0 223.0 L639.0 223.0 L635.5 219.5 Z" fill="#3f6f6c"/></svg>
<div style="position:absolute;left:627px;top:229px;width:17px;height:8px;border:1px solid #4e7d7a;background:#fff"></div>
<div style="position:absolute;left:627px;top:347px;width:17px;height:17px;border:1px solid #4e7d7a;background:#fff"></div>
<svg style="left:0;top:0" width="1048" height="654"><path d="M632.0 354.0 L639.0 354.0 L635.5 357.5 Z" fill="#3f6f6c"/></svg>
<div style="position:absolute;left:456px;top:364px;width:17px;height:17px;border:1px solid #4e7d7a;background:#fff"></div>
<svg style="left:0;top:0" width="1048" height="654"><path d="M466.0 369.0 L466.0 376.0 L462.5 372.5 Z" fill="#3f6f6c"/></svg>
<div style="position:absolute;left:472px;top:364px;width:87px;height:17px;border:1px solid #4e7d7a;background:#fff"></div>
<div style="position:absolute;left:610px;top:364px;width:17px;height:17px;border:1px solid #4e7d7a;background:#fff"></div>
<svg style="left:0;top:0" width="1048" height="654"><path d="M617.0 369.0 L617.0 376.0 L620.5 372.5 Z" fill="#3f6f6c"/></svg>
<div style="position:absolute;left:486px;top:390px;width:75px;height:23px;background:#efeff2;border:1px solid #7f6d58;box-shadow:inset 0 0 0 1px #f2c99a"></div>
<div style="position:absolute;left:516px;top:395.05px;font-size:11px;line-height:12.639px;color:#222;white-space:nowrap;">OK</div>
<div style="position:absolute;left:570px;top:390px;width:75px;height:23px;background:#f1f1f3;border:1px solid #e9d2a8"></div>
<div style="position:absolute;left:582px;top:395.05px;font-size:11px;line-height:12.639px;color:#222;white-space:nowrap;">Abbrechen</div>
<div style="position:absolute;left:422px;top:417px;width:231px;height:12px;background:linear-gradient(#f5f6f7,#fbfbfc);border-top:1px solid #e3e5e6"></div>
<svg style="left:640px;top:416px" width="12" height="12"><g fill="#111"><circle cx="8.6" cy="4.4" r="1.2"/><circle cx="4.4" cy="8.4" r="1.2"/><circle cx="8.6" cy="8.4" r="1.2"/></g></svg>
<div style="position:absolute;left:257px;top:125px;width:407px;height:327px;border:5px solid #f40000"></div>
<div style="position:absolute;left:392px;top:133px;width:41px;height:37px;border:5px solid #f40000"></div>
</body></html>
